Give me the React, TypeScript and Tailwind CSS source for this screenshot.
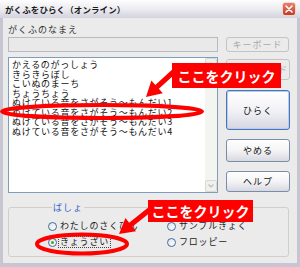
import React from 'react';

const songs = [
  'かえるのがっしょう',
  'きらきらぼし',
  'こいぬのまーち',
  'ちょうちょう',
  'ぬけている音をさがそう〜もんだい1',
  'ぬけている音をさがそう〜もんだい2',
  'ぬけている音をさがそう〜もんだい3',
  'ぬけている音をさがそう〜もんだい4',
];

type P = [number, number];

// thick arrow polygon from tail to tip
function arrowPoints(tail: P, tip: P, head = 15, hw = 8.5, sw = 2.6) {
  const dx = tip[0] - tail[0];
  const dy = tip[1] - tail[1];
  const len = Math.hypot(dx, dy);
  const ux = dx / len;
  const uy = dy / len;
  const nx = -uy;
  const ny = ux;
  const bx = tip[0] - ux * head;
  const by = tip[1] - uy * head;
  const pts: P[] = [
    [tail[0] + nx * sw, tail[1] + ny * sw],
    [bx + nx * sw, by + ny * sw],
    [bx + nx * hw, by + ny * hw],
    tip,
    [bx - nx * hw, by - ny * hw],
    [bx - nx * sw, by - ny * sw],
    [tail[0] - nx * sw, tail[1] - ny * sw],
  ];
  return pts.map((p) => p.join(',')).join(' ');
}

const Btn: React.FC<{ children: React.ReactNode; h: string; disabled?: boolean; focused?: boolean }> = ({
  children,
  h,
  disabled,
  focused,
}) => {
  const base = 'w-full flex items-center justify-center rounded-[3px] text-[9px] tracking-[1px] leading-none';
  let look =
    'border border-[#7b8cab] bg-linear-to-b from-white via-[#f4f4f6] to-[#d8d8e2] text-[#111]';
  if (disabled) look = 'border border-[#c4c4c4] bg-[#ebebeb] text-[#a9a9a9]';
  if (focused)
    look =
      'border border-[#4a74b4] bg-linear-to-b from-white via-[#f2f2f6] to-[#d6d6e2] text-[#111] shadow-[inset_0_0_0_1px_#b6cdf0]';
  return <div className={`${base} ${look} ${h}`}>{children}</div>;
};

const Radio: React.FC<{ label: string; checked?: boolean; focus?: boolean }> = ({ label, checked, focus }) => (
  <div className="flex items-center h-[16px]">
    <span className="w-[9px] h-[9px] shrink-0 rounded-full border border-[#3f6a9e] bg-linear-to-br from-[#e2e2e2] to-white flex items-center justify-center">
      {checked && <span className="w-[3px] h-[3px] rounded-full bg-[#34b034]" />}
    </span>
    <span
      className={
        focus
          ? 'ml-[1px] px-[1px] leading-[10px] border border-dotted border-[#444]'
          : 'ml-[1px] px-[1px] leading-[10px] border border-transparent'
      }
    >
      {label}
    </span>
  </div>
);

export default function App() {
  return (
    <div className="relative w-[300px] h-[267px] overflow-hidden bg-[#c6c5d1] font-['Noto_Sans_CJK_JP',sans-serif] text-[#222] select-none">
      {/* title bar */}
      <div className="h-[18px] flex items-center justify-between pl-[5px] pr-[4px] bg-linear-to-b from-[#fdfdfe] via-[#ececf1] to-[#d3d2de]">
        <span className="text-[8.5px] font-bold tracking-[0.1px] text-[#1a1a1a]">がくふをひらく（オンライン）</span>
        <div className="w-[14px] h-[14px] rounded-[3px] border border-[#f4d6d0] bg-linear-to-b from-[#e8806b] to-[#c23a22] flex items-center justify-center">
          <svg width="8" height="8" viewBox="0 0 8 8">
            <path d="M1 1 L7 7 M7 1 L1 7" stroke="white" strokeWidth="1.6" strokeLinecap="round" />
          </svg>
        </div>
      </div>

      {/* dialog body */}
      <div className="mx-[3px] h-[245px] bg-[#ebebec] px-[5px] pt-[6px] flex flex-col">
        <div className="h-[11px] leading-[11px] text-[9px] tracking-[1px] text-[#333]">がくふのなまえ</div>

        <div className="mt-[2px] flex">
          <div className="w-[210px] h-[15px] border border-[#b9b9c0] bg-[#e9e9ea]" />
          <div className="ml-[8px] w-[63px]">
            <Btn h="h-[15px]" disabled>
              キーボード
            </Btn>
          </div>
        </div>

        <div className="mt-[5px] flex">
          {/* song list */}
          <div className="w-[210px] h-[136px] border border-[#7f9db9] bg-white flex">
            <div className="flex-1 pl-[3px] pt-[2px] text-[9px] tracking-[0.7px] leading-[9.5px] text-[#111] whitespace-nowrap overflow-hidden">
              {songs.map((s) => (
                <div key={s}>{s}</div>
              ))}
            </div>
            <div className="w-[12px] bg-[#f4f4f1] flex flex-col justify-between">
              <div className="h-[12px] border border-[#d9d9d4] rounded-[2px] bg-[#f0f0ee] flex items-center justify-center">
                <svg width="6" height="4" viewBox="0 0 6 4">
                  <path d="M0.5 3.5 L3 1 L5.5 3.5" stroke="#bdbdb6" fill="none" strokeWidth="1.2" />
                </svg>
              </div>
              <div className="h-[12px] border border-[#d9d9d4] rounded-[2px] bg-[#f0f0ee] flex items-center justify-center">
                <svg width="6" height="4" viewBox="0 0 6 4">
                  <path d="M0.5 0.5 L3 3 L5.5 0.5" stroke="#bdbdb6" fill="none" strokeWidth="1.2" />
                </svg>
              </div>
            </div>
          </div>

          {/* button column */}
          <div className="ml-[8px] w-[64px] flex flex-col">
            <div className="mt-[2px]">
              <Btn h="h-[21px]" disabled>
                ダウンロード
              </Btn>
            </div>
            <div className="mt-[10px]">
              <Btn h="h-[40px]" focused>
                ひらく
              </Btn>
            </div>
            <div className="mt-[9px]">
              <Btn h="h-[23px]">やめる</Btn>
            </div>
            <div className="mt-[9px]">
              <Btn h="h-[21px]">ヘルプ</Btn>
            </div>
          </div>
        </div>

        {/* location group */}
        <fieldset className="mt-[9px] w-[281px] h-[55px] border border-[#d0d0c8] rounded-[3px] pl-[39px] pt-[5px]">
          <legend className="ml-[4px] px-[1px] text-[9px] leading-[11px] tracking-[1px] text-[#2f5fc4]">ばしょ</legend>
          <div className="grid grid-cols-[119px_1fr] text-[9px] tracking-[0.8px] text-[#222]">
            <Radio label="わたしのさくひん" />
            <Radio label="サンプルきょく" />
            <Radio label="きょうざい" checked focus />
            <Radio label="フロッピー" />
          </div>
        </fieldset>
      </div>

      {/* red annotations */}
      <svg className="absolute inset-0 pointer-events-none" width="300" height="267" viewBox="0 0 300 267">
        <ellipse cx="102" cy="111.5" rx="100" ry="6.5" fill="none" stroke="#ff0000" strokeWidth="4" />
        <ellipse cx="82" cy="244" rx="45" ry="9.5" fill="none" stroke="#ff0000" strokeWidth="4" />
        <polygon points={arrowPoints([180, 66], [146, 97])} fill="#ff0000" />
        <polygon points={arrowPoints([158, 203], [119, 234])} fill="#ff0000" />
      </svg>
      <div className="absolute left-[172px] top-[63px] w-[109px] h-[25px] bg-[#ff0000] flex items-center justify-center text-white font-bold text-[14px] leading-none">
        ここをクリック
      </div>
      <div className="absolute left-[148px] top-[200px] w-[105px] h-[22px] bg-[#ff0000] flex items-center justify-center text-white font-bold text-[14px] leading-none">
        ここをクリック
      </div>
    </div>
  );
}
